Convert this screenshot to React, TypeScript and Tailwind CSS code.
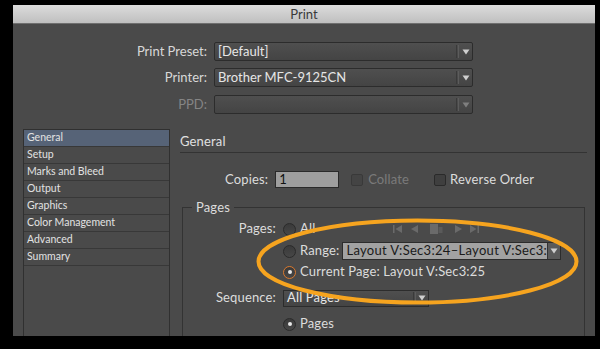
import React from 'react';

const font = { fontFamily: 'Lato, "Open Sans", sans-serif' };

function Arrow() {
    return (
        <svg width="8" height="6" viewBox="0 0 8 6" className="shrink-0">
            <path d="M0.5 0.5 L7.5 0.5 L4 5.5 Z" fill="#cfcfcf" />
        </svg>
    );
}

function TopSelect({ value, disabled }: { value?: string; disabled?: boolean }) {
    return (
        <div className="w-[259px] h-[19px] flex items-center border border-[#2c2c2c] bg-gradient-to-b from-[#4f4f4f] to-[#444444] rounded-[2px]">
            <span className={`flex-1 pl-[3px] text-[13px] leading-none ${disabled ? 'text-[#888]' : 'text-[#e6e6e6]'}`}>{value}</span>
            <div className="h-[13px] w-[3px] border-x border-l-[#3a3a3a] border-r-[#5c5c5c]" />
            <div className={`w-[13px] flex justify-center ${disabled ? 'opacity-40' : ''}`}>
                <Arrow />
            </div>
        </div>
    );
}

function Radio({ on, orange }: { on?: boolean; orange?: boolean }) {
    return (
        <span
            className={`w-[13px] h-[13px] rounded-full shrink-0 flex items-center justify-center bg-gradient-to-b from-[#3a3a3a] to-[#474747] border ${
                orange ? 'border-[#d9782d]' : 'border-[#2a2a2a]'
            }`}
        >
            {on && <span className="w-[4px] h-[4px] rounded-full bg-[#e8e8e8]" />}
        </span>
    );
}

function Check() {
    return <span className="w-[12px] h-[12px] shrink-0 rounded-[2px] border border-[#2a2a2a] bg-[#3f3f3f]" />;
}

function NavIcons() {
    return (
        <svg width="90" height="10" viewBox="0 0 90 10" className="shrink-0">
            <g fill="#6a6a6a">
                <rect x="0" y="1" width="1.5" height="8" />
                <path d="M9 1 L2.5 5 L9 9 Z" />
                <path d="M25 1 L18 5 L25 9 Z" />
                <rect x="37" y="0" width="8" height="10" />
                <rect x="45.5" y="3" width="4" height="6" fill="#5a5a5a" />
                <path d="M62 1 L69 5 L62 9 Z" />
                <path d="M77 1 L83.5 5 L77 9 Z" />
                <rect x="84.5" y="1" width="1.5" height="8" />
            </g>
        </svg>
    );
}

const items = ['General', 'Setup', 'Marks and Bleed', 'Output', 'Graphics', 'Color Management', 'Advanced', 'Summary'];

export default function App() {
    return (
        <div className="relative w-[600px] h-[349px] bg-black pt-[5px] pl-[13px] overflow-hidden" style={font}>
            <div className="w-[582px] h-[331px] flex flex-col bg-[#4a4a4a] overflow-hidden">
                <div className="h-[19px] shrink-0 flex items-center justify-center bg-gradient-to-b from-[#dcdcdc] to-[#bfbfbf] border-b border-[#6f6f6f]">
                    <span className="text-[13px] text-[#3a3a3a] leading-none">Print</span>
                </div>

                <div className="pt-[18px] flex flex-col text-[13px]">
                    <div className="flex items-center h-[19px]">
                        <span className="w-[194px] text-right text-[#d8d8d8]">Print Preset:</span>
                        <div className="ml-[7px]">
                            <TopSelect value="[Default]" />
                        </div>
                    </div>
                    <div className="flex items-center h-[19px] mt-[7px]">
                        <span className="w-[194px] text-right text-[#d8d8d8]">Printer:</span>
                        <div className="ml-[7px]">
                            <TopSelect value="Brother MFC-9125CN" />
                        </div>
                    </div>
                    <div className="flex items-center h-[19px] mt-[8px]">
                        <span className="w-[194px] text-right text-[#858585]">PPD:</span>
                        <div className="ml-[7px]">
                            <TopSelect disabled />
                        </div>
                    </div>
                </div>

                <div className="flex flex-1 mt-[15px] min-h-0">
                    <div className="ml-[10px] w-[147px] border border-[#303030] border-b-0 flex flex-col">
                        {items.map((it, i) => (
                            <div
                                key={it}
                                className={`h-[17px] shrink-0 flex items-center pl-[3px] text-[10.5px] text-[#e2e2e2] border-b border-[#383838] ${
                                    i === 0 ? 'bg-[#566377]' : ''
                                }`}
                            >
                                {it}
                            </div>
                        ))}
                    </div>

                    <div className="flex-1 flex flex-col text-[13px] tracking-[0.15px] text-[#dcdcdc]">
                        <div className="ml-[10px] mr-[8px] pt-[4px] pb-[3px] border-b border-[#333]">
                            <div className="h-[16px] leading-[16px] text-[#e0e0e0]">General</div>
                        </div>

                        <div className="flex items-center h-[17px] mt-[18px] pl-[55px]">
                            <span>Copies:</span>
                            <div className="ml-[7px] w-[64px] h-[17px] border border-[#2a2a2a] bg-[#9e9e9e] flex items-center pl-[3px] text-[#111]">
                                1
                            </div>
                            <div className="ml-[12px] flex items-center gap-[5px] opacity-50">
                                <Check />
                                <span className="text-[#aaa]">Collate</span>
                            </div>
                            <div className="ml-[25px] flex items-center gap-[4px]">
                                <Check />
                                <span>Reverse Order</span>
                            </div>
                        </div>

                        <div className="relative flex-1 mt-[19px] ml-[12px] mr-[10px] border border-[#333] border-b-0 pt-[12px]">
                            <span className="absolute -top-[9px] left-[9px] px-[4px] bg-[#4a4a4a] leading-[16px]">Pages</span>

                            <div className="flex items-center h-[18px]">
                                <span className="w-[93px] text-right">Pages:</span>
                                <div className="ml-[7px] flex items-center">
                                    <Radio />
                                    <span className="ml-[4px] w-[93px]">All</span>
                                    <NavIcons />
                                </div>
                            </div>
                            <div className="flex items-center h-[18px] mt-[4px]">
                                <span className="w-[93px]" />
                                <div className="ml-[7px] flex items-center">
                                    <Radio />
                                    <span className="ml-[4px]">Range:</span>
                                    <div className="ml-[3px] w-[219px] h-[18px] border border-[#2c2c2c] bg-[#a2a2a2] flex items-center">
                                        <span className="flex-1 pl-[3px] whitespace-nowrap text-[#1a1a1a] tracking-[0.3px]">
                                            Layout V:Sec3:24–Layout V:Sec3:
                                        </span>
                                        <div className="w-[14px] h-full bg-[#5a5a5a] border-l border-[#333] flex items-center justify-center">
                                            <Arrow />
                                        </div>
                                    </div>
                                </div>
                            </div>
                            <div className="flex items-center h-[18px] mt-[3px]">
                                <span className="w-[93px]" />
                                <div className="ml-[7px] flex items-center">
                                    <Radio on orange />
                                    <span className="ml-[4px]">Current Page: Layout V:Sec3:25</span>
                                </div>
                            </div>
                            <div className="flex items-center h-[18px] mt-[8px]">
                                <span className="w-[93px] text-right">Sequence:</span>
                                <div className="ml-[7px] w-[146px] h-[17px] border border-[#2c2c2c] bg-gradient-to-b from-[#4f4f4f] to-[#444] flex items-center">
                                    <span className="flex-1 pl-[3px] text-[#e6e6e6]">All Pages</span>
                                    <div className="h-[12px] w-[3px] border-x border-l-[#3a3a3a] border-r-[#5c5c5c]" />
                                    <div className="w-[12px] flex justify-center">
                                        <Arrow />
                                    </div>
                                </div>
                            </div>
                            <div className="flex items-center h-[18px] mt-[8px]">
                                <span className="w-[93px]" />
                                <div className="ml-[7px] flex items-center">
                                    <Radio on />
                                    <span className="ml-[4px]">Pages</span>
                                </div>
                            </div>
                        </div>
                    </div>
                </div>
            </div>

            <svg className="absolute inset-0 pointer-events-none" width="600" height="349" viewBox="0 0 600 349">
                <ellipse cx="417.5" cy="261.5" rx="159" ry="41" fill="none" stroke="#f6a41f" strokeWidth="4" />
            </svg>
        </div>
    );
}
